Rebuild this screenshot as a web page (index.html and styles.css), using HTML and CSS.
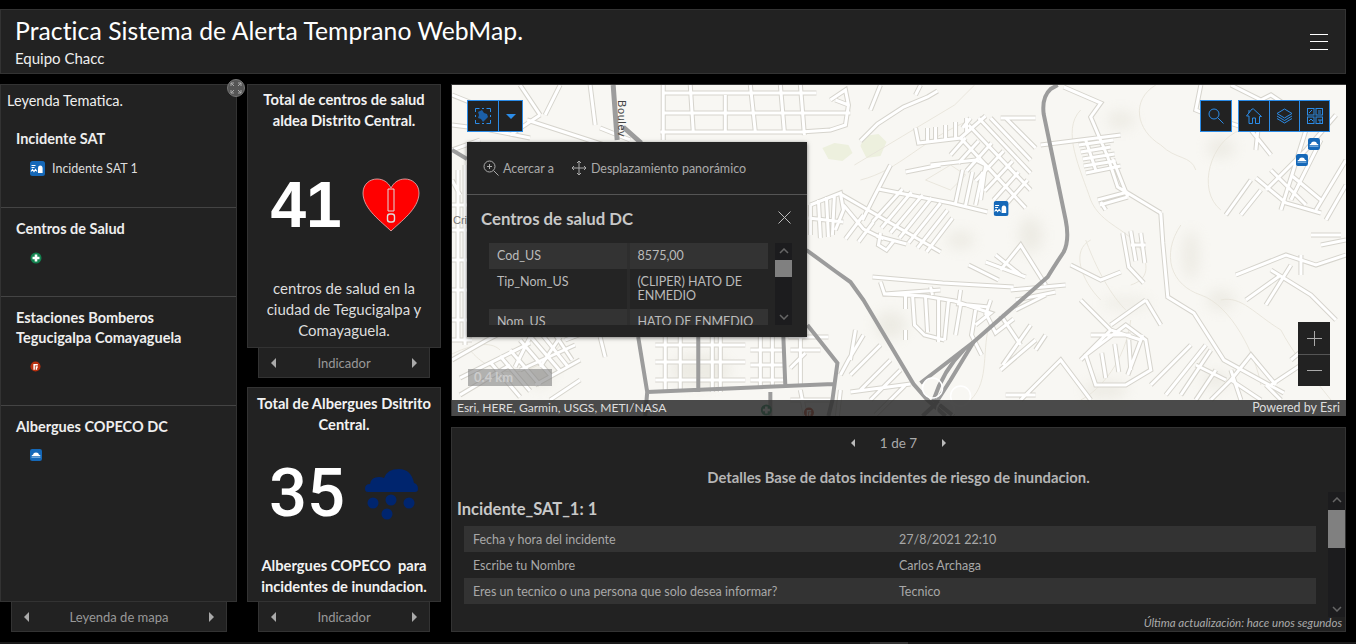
FILE: index.html
```html
<!DOCTYPE html>
<html lang="es">
<head>
<meta charset="utf-8">
<title>Practica Sistema de Alerta Temprano WebMap.</title>
<link rel="stylesheet" href="styles.css">
</head>
<body>
<svg class="defs" width="0" height="0" aria-hidden="true">
  <defs>
    <symbol id="i-flood" viewBox="0 0 15 15">
      <rect width="15" height="15" rx="2.5" fill="#1568b8"/>
      <path d="M8 12V7.500q0-3 2.300-3t2.300 3V12z" fill="#fff"/>
      <path d="M1.500 4.500h4M1.500 6.500h3" stroke="#fff" stroke-width="1.100" fill="none"/>
      <path d="M1 10.500l1.500-2 1.500 2 1.500-2 1.500 2" stroke="#fff" stroke-width="1.100" fill="none"/>
    </symbol>
    <symbol id="i-cloud" viewBox="0 0 12 12">
      <rect width="12" height="12" rx="2.2" fill="#1568b8"/>
      <path d="M1.500 7.200q0-1.400 1.500-1.500 .3-2.200 3-2.200t3 2.200q1.600 .1 1.500 1.500z" fill="#fff"/>
      <path d="M1.500 8.500h9" stroke="#6aa3d8" stroke-width="1"/>
    </symbol>
    <symbol id="i-health" viewBox="0 0 12 12">
      <circle cx="6" cy="6" r="5.500" fill="#13824f"/>
      <path d="M6 2.500v7M2.500 6h7" stroke="#fff" stroke-width="2.600"/>
    </symbol>
    <symbol id="i-fire" viewBox="0 0 12 12">
      <circle cx="6" cy="6" r="5.500" fill="#b8300f"/>
      <path d="M4.500 9.500V4h4M7 9.500V6.500h1.500" stroke="#fff" stroke-width="1.600" fill="none"/>
    </symbol>
  </defs>
</svg>

<div class="app">
  <header class="topbar">
    <div class="titles">
      <h1 class="title">Practica Sistema de Alerta Temprano WebMap.</h1>
      <p class="subtitle">Equipo Chacc</p>
    </div>
    <button class="burger" aria-label="Menú"><span></span><span></span><span></span></button>
  </header>

  <main class="layout">
    <section class="col-legend card">
      <div class="card-body legend">
        <p class="legend-head">Leyenda Tematica.</p>
        <div class="legend-group lg-1">
          <h3>Incidente SAT</h3>
          <div class="legend-item"><svg class="ic15"><use href="#i-flood"/></svg><span>Incidente SAT 1</span></div>
        </div>
        <div class="legend-group lg-2">
          <h3>Centros de Salud</h3>
          <div class="legend-item"><svg class="ic12"><use href="#i-health"/></svg></div>
        </div>
        <div class="legend-group lg-3">
          <h3>Estaciones Bomberos Tegucigalpa Comayaguela</h3>
          <div class="legend-item"><svg class="ic10"><use href="#i-fire"/></svg></div>
        </div>
        <div class="legend-group lg-4">
          <h3>Albergues COPECO DC</h3>
          <div class="legend-item"><svg class="ic12"><use href="#i-cloud"/></svg></div>
        </div>
      </div>
      <div class="tab tab-legend">
        <i class="tri tri-l"></i><span>Leyenda de mapa</span><i class="tri tri-r"></i>
      </div>
      <button class="expand" aria-label="Expandir">
        <svg width="12" height="12" viewBox="0 0 12 12" fill="none" stroke="#aaa" stroke-width="1"><path d="M1 4V1h3M1 1l3 3M8 1h3v3M11 1L8 4M1 8v3h3M1 11l3-3M8 11h3V8M11 11L8 8"/></svg>
      </button>
    </section>

    <div class="col-ind">
      <section class="card ind ind-1">
        <div class="card-body ind-body">
          <p class="ind-title">Total de centros de salud aldea Distrito Central.</p>
          <div class="ind-mid">
            <span class="num num-41">41</span>
            <svg class="heart" viewBox="0 0 58 54"><path d="M29 53C20 44 1 31 1 15 1 6 8 1 15 1c6 0 11 3 14 9 3-6 8-9 14-9 7 0 14 5 14 14 0 16-19 29-28 38z" fill="#f00" stroke="#e6b8b8" stroke-width=".8"/><path d="M26 11h6v22h-6z" fill="#f00" stroke="#ddd" stroke-width="1"/><rect x="25.500" y="36" width="7" height="8" rx="2.500" fill="#f00" stroke="#ddd" stroke-width="1.400"/></svg>
          </div>
          <p class="ind-text">centros de salud en la ciudad de Tegucigalpa y Comayaguela.</p>
        </div>
        <div class="tab tab-ind"><i class="tri tri-l"></i><span>Indicador</span><i class="tri tri-r"></i></div>
      </section>
      <section class="card ind ind-2">
        <div class="card-body ind-body">
          <p class="ind-title">Total de Albergues Dsitrito Central.</p>
          <div class="ind-mid ind-mid-2">
            <span class="num num-35">35</span>
            <svg class="cloud" viewBox="0 0 56 56" fill="#00256e"><path d="M2 24q0-5 5-5 1-7 9-7 3 0 5 1 3-9 15-9 12 0 15 14 4 1 4 6 0 3-3 3H5q-3 0-3-3z"/><circle cx="10" cy="38" r="5.500"/><circle cx="28" cy="35" r="5.500"/><circle cx="46" cy="38" r="5.500"/><circle cx="24" cy="49" r="5.500"/></svg>
          </div>
          <p class="ind-title ind-foot">Albergues COPECO&nbsp; para incidentes de inundacion.</p>
        </div>
        <div class="tab tab-ind"><i class="tri tri-l"></i><span>Indicador</span><i class="tri tri-r"></i></div>
      </section>
    </div>

    <div class="col-main">
      <section class="map">
        <svg class="basemap" viewBox="452 85 893 331" preserveAspectRatio="none">
          <defs>
            <filter id="blur" x="-50%" y="-50%" width="200%" height="200%"><feGaussianBlur stdDeviation="7"/></filter>
            <g id="streets">
              <path d="M452 95l30 12 40 10M520 85l20 30M480 140l-28 10M452 125l40 5M490 130l40 8M560 85l-15 30M540 115l-30 20"/>
              <path d="M527 120l80 26M600 128l30 12M590 85l5 40"/>
              <path d="M663 85v55M663 93H816M663 113H850M660 132H800l30-2 15-5 3-20-3-15-15 10M690 85l3 47M725 95v37M750 85l5 47M780 85l4 47M800 85l4 50M835 100l13 5"/>
              <path d="M860 141l17-17 26-17 24-10 10-6M880 85l-10 25M920 85l-5 10"/>
              <path d="M915 128l3 15 42-5 25-22M927 128v14M935 127v14M945 125v15M955 122v16M966 118v14"/>
              <path d="M960 138l65 70M968 125l62 65M978 118l52 55M990 118l40 42M1005 118l30 30M950 155l15-17M958 163l20-22M966 171l25-28M975 181l28-30M984 191l28-30M993 200l25-28M1002 208l25-28M970 118l-8 10M1000 118h35"/>
              <path d="M878 189l72 14 37 9M840 194l100 58M890 165l-18 35-10 20M930 165l45-5 10 5 -5 35M962 170l-7 33M972 172l-7 33M982 172l-7 33M905 172l35-7"/>
              <path d="M872 222l30-33M881 228l30-36M890 233l32-38M899 238l32-40M908 243l32-40M917 248l30-38M926 252l26-34M876 236l30 8M880 233l-2 12 8 5 8-10"/>
              <path d="M810 205l30-12 3 17-8 20M810 205v30M818 200l2 38M826 197l2 40M834 195l-2 40M808 218l35 4M843 205l20 24 20 10M863 215l-18 24M873 222l-15 20"/>
              <path d="M872 277l70 6 71 4M880 282l4 12 56-4M884 294l40 2 30 5 36 12 -15 12M930 287l2 8M960 290l-2 14 30 3M948 300l-4 40M960 305l-5 30M975 310l-4 25 10 20M905 294v15M912 295l2 30 10 10 20 5M925 297l2 35M938 297v45M905 330v10M985 313l10 20 18-14"/>
              <path d="M1000 270l20-25 25 40M985 262l40 15M968 265l30 15M995 255l25 20"/>
              <path d="M1063 87l37 16-10 14 17 40 10 30 43 26M1127 197l-15-38M1040 145l40-5 40-5M1085 140l10 30M1078 145l35-5M1080 152l30-5M1082 159l32-5M1083 166l32-5M1085 173l35-7M1097 200l30-8M1127 197l-28 8M1105 210l-5-8"/>
              <path d="M1160 213l2 30 5 54 26 16 30 47 60 33M1122 233l6 34 15 16M1140 233l4 30M1130 231l5 30M1130 245l15 0"/>
              <path d="M1230 85l30 15 10-5 30 20 25 5M1200 85l-5 25 25 10 30 10 20 25M1260 100l-5 50M1335 115l-30 35-40 40M1320 140l-30 60M1305 130l-25 80M1290 175l30 25M1255 178l30 25 35 10M1225 215l25-35M1240 215l20-25M1270 170l35 35M1345 160l-30 50M1345 185l-20 35"/>
              <path d="M1235 275l50-20 30 10 30-10M1270 270l40 25 25 25M1245 300l35-25M1265 305l25-40M1300 255v20M1345 240l-25 5M1310 235l30 0"/>
              <path d="M1070 265l30 15 20-8M1080 300l30 30 30 10M1110 325l35-25M1090 335h40M1142 335l-15 40M1145 300l15 25M1080 360l30-30M1095 385l-10-30 40-30 20 15 5 30-25 15zM1105 378l-4-25M1118 372l-4-28M1130 370l-2-30"/>
              <path d="M1150 385l40-40M1165 395l40-50M1180 395l30-45M1195 400l20-30M1225 380l-30-15M1210 400l20-20M1240 400l-10-30M1260 400l-30-20 20-25 25 30M1280 400l-15-15M1270 385l30-20M1290 360l30-25"/>
              <path d="M990 300l-5 15M1000 315l20 30M1030 325l-28 40M1045 335l-10 15M1000 370l35-30M1005 395l30 0M1020 400l40-40 30 40M1010 290l55-5M1015 300l40-8M1015 310l30-15"/>
              <path d="M452 360l35-20 30-15 40-5M460 378l70-35M460 395l50-30M520 340l30 35M530 336l30 35M540 332l28 35M552 330l20 30M510 350l30 35M500 356l30 35M490 362l30 35M565 340l40-15M520 370l55-25M535 385l45-25M550 400l30-20"/>
              <path d="M655 345h90M655 362h90M655 380h90M665 337v55M680 337v55M720 337v55M800 337v50M712 337v55M750 350h35M750 365h35M750 380h35M760 337v50M772 337v50M788 337h40M790 350h30M790 368l15-15"/>
              <path d="M800 390l5 26M790 400l40 0M840 390l-3 26M850 392l60-8M863 335l-15 25-8 15M880 345l-30 30M890 360l-30 30M900 370l-30 30M905 385l-30 30M855 330l-5 30"/>
              <path d="M452 180l8 15M452 205h15M452 230h15M452 260h15M452 290h15M452 320h15M458 170v170M465 165v180M530 337l-15 30M600 337l5 20M560 337l-20 30M452 340h20"/>
            </g>
          </defs>
          <rect x="452" y="85" width="893" height="331" class="land"/>
          <g class="hills" filter="url(#blur)">
            <ellipse cx="1125" cy="303" rx="25" ry="5"/><ellipse cx="1190" cy="255" rx="8" ry="25"/><ellipse cx="1215" cy="380" rx="14" ry="8"/><ellipse cx="1105" cy="390" rx="22" ry="9"/><ellipse cx="1220" cy="300" rx="14" ry="10"/><ellipse cx="1120" cy="120" rx="14" ry="9"/><ellipse cx="1220" cy="148" rx="14" ry="10"/><ellipse cx="960" cy="240" rx="14" ry="9"/><ellipse cx="1030" cy="235" rx="12" ry="18"/><ellipse cx="890" cy="325" rx="16" ry="14"/><ellipse cx="700" cy="370" rx="30" ry="16"/><ellipse cx="540" cy="375" rx="12" ry="12"/>
          </g>
          <path class="park" d="M822 148l12-5 14 2 4 8-10 8-14-2zM864 136l14-2 8 8-6 14-14 2-6-12z"/>
          <g class="contours">
            <path d="M854 165l100-60 20-20M860 180c40-10 60-40 110-60M925 180l25 10 15-15-15-10zM1080 110c-20 20 0 60 10 90 10 25 40 30 50 50s5 30-10 35M1155 85c-25 15-20 45 5 60 15 15 30 10 35 25M1240 130c-30 10-45 60-20 80M1085 240c15 40 30 60 40 70M1180 225c-20 30-10 60 20 70 30 10 55 60 60 90M1130 320c-5 40-30 70-50 80M990 320c-10 30 0 60-20 80M1220 300c20-5 35 15 60 30 10 20 30 45 50 70M450 355c20-10 40-15 50-5M560 345c-30 40-70 30-90 5M1100 300c-20-20-30-50-10-60"/>
          </g>
          <use href="#streets" class="casing"/>
          <use href="#streets" class="street"/>
          <g class="hwy">
            <path d="M1057 85l-7 4q-9 8-7 25l22 106q4 20-2 32-10 15-16 25l-74 65-53 41"/>
            <path d="M973 342l-23 38-16 25-12 11"/>
            <path d="M963 350q-20 20-30 50l20 16"/>
            <path d="M806 250l30 22 14 10 13 18 50 84 14 16 18 16"/>
            <path class="hwy-w" d="M613 85l4 55M623 127l18 16"/>
            <path d="M452 150l15 9M638 337l9 55-2 24M647 392l186-8M698 337v55M783 337l2 50M807 325l30 38-5 37-4 16M770 392v24"/>
          </g>
          <g class="interchange"><circle cx="932" cy="388" r="10"/><circle cx="960" cy="396" r="10"/><circle cx="945" cy="410" r="9"/></g>
          <text x="618" y="100" class="boulev" transform="rotate(90 618 100)">Boulev</text>
          <text x="453" y="224" class="crilabel">Cri</text>
          <use href="#i-flood" x="993" y="201" width="15" height="15"/>
          <use href="#i-cloud" x="1307" y="138" width="12" height="12"/>
          <use href="#i-cloud" x="1295" y="154" width="12" height="12"/>
          <use href="#i-health" x="760" y="404" width="12" height="12"/>
          <use href="#i-fire" x="803" y="407" width="11" height="11"/>
        </svg>

        <div class="tools tools-left">
          <button class="tbtn"><svg width="16" height="16" viewBox="0 0 16 16" fill="none" stroke="#2b8ce8"><path d="M.5 4V.5h4M7 .5h2M11.500 .5h4V4M15.500 7v2M15.500 12v3.500h-4M9 15.500H7M4.500 15.500h-4V12M.5 9V7"/><path d="M3 4l4-2 2 3 3 1 1 3-3 3-2 2-2-3-3-1 1-3z" fill="#1b5fa8" stroke="none"/></svg></button>
          <button class="tbtn"><i class="caret"></i></button>
        </div>
        <div class="tools tools-search">
          <button class="tbtn"><svg width="16" height="16" viewBox="0 0 16 16" fill="none" stroke="#2b8ce8" stroke-width="1"><circle cx="6" cy="6" r="5"/><path d="M9.500 9.500l6 6"/></svg></button>
        </div>
        <div class="tools tools-right">
          <button class="tbtn"><svg width="16" height="16" viewBox="0 0 16 16" fill="none" stroke="#2b8ce8" stroke-width="1"><path d="M.5 8L6 1h1.500l8 7.500h-2V15.500H9.500V10h-3v5.500H3V8zM3 2v3"/></svg></button>
          <button class="tbtn"><svg width="17" height="16" viewBox="0 0 17 16" fill="none" stroke="#2b8ce8" stroke-width="1"><path d="M8.500 1L16 5.500 8.500 10 1 5.500zM1 8l7.500 4.500L16 8M1 10.500L8.500 15 16 10.500"/></svg></button>
          <button class="tbtn"><svg width="16" height="16" viewBox="0 0 16 16" fill="none" stroke="#2b8ce8" stroke-width="1"><rect x=".5" y=".5" width="6.500" height="6.500"/><rect x="9" y=".5" width="6.500" height="6.500"/><rect x=".5" y="9" width="6.500" height="6.500"/><rect x="9" y="9" width="6.500" height="6.500"/><path d="M2 5l3-3M11 3h3M11 5h3M2 13l2-2 2 2M11 12h4M13 12v3"/></svg></button>
        </div>

        <div class="zoomctl">
          <button class="zbtn"><svg width="15" height="15" viewBox="0 0 15 15" stroke="#aaa"><path d="M7.500 0v15M0 7.500h15"/></svg></button>
          <button class="zbtn"><svg width="15" height="15" viewBox="0 0 15 15" stroke="#aaa"><path d="M0 7.500h15"/></svg></button>
        </div>

        <div class="scale"><span>0.4 km</span></div>

        <div class="attrib"><span class="attrib-src">Esri, HERE, Garmin, USGS, METI/NASA</span><span>Powered by Esri</span></div>

        <div class="popup">
          <div class="pop-actions">
            <span class="act"><svg width="16" height="16" viewBox="0 0 16 16" fill="none" stroke="#aaa"><circle cx="6.500" cy="6.500" r="5.500"/><path d="M10.500 10.500L15.500 15.500M6.500 4v5M4 6.500h5"/></svg>Acercar a</span>
            <span class="act"><svg width="16" height="16" viewBox="0 0 16 16" fill="none" stroke="#aaa"><path d="M8 1v14M1 8h14M6 3l2-2 2 2M6 13l2 2 2-2M3 6L1 8l2 2M13 6l2 2-2 2"/></svg>Desplazamiento panorámico</span>
          </div>
          <div class="pop-head">
            <h2>Centros de salud DC</h2>
            <svg class="pop-x" width="13" height="13" viewBox="0 0 13 13" stroke="#bbb"><path d="M.5.500l12 12M12.500.500l-12 12"/></svg>
          </div>
          <div class="pop-scroll">
            <table class="pop-table">
              <tr><td>Cod_US</td><td>8575,00</td></tr>
              <tr><td>Tip_Nom_US</td><td>(CLIPER) HATO DE ENMEDIO</td></tr>
              <tr><td>Nom_US</td><td>HATO DE ENMEDIO</td></tr>
            </table>
            <div class="sbar sbar-pop">
              <svg class="chev" width="10" height="6" viewBox="0 0 10 6" fill="none" stroke="#666" stroke-width="1.500"><path d="M1 5l4-4 4 4"/></svg>
              <i class="thumb"></i>
              <svg class="chev chev-b" width="10" height="6" viewBox="0 0 10 6" fill="none" stroke="#666" stroke-width="1.500"><path d="M1 1l4 4 4-4"/></svg>
            </div>
          </div>
        </div>
      </section>

      <section class="list">
        <div class="pager"><i class="tri tri-l"></i><span>1 de 7</span><i class="tri tri-r"></i></div>
        <p class="list-title">Detalles Base de datos incidentes de riesgo de inundacion.</p>
        <div class="list-scroll">
          <div class="list-content">
            <h2>Incidente_SAT_1: 1</h2>
            <table class="list-table">
              <tr><td>Fecha y hora del incidente</td><td>27/8/2021 22:10</td></tr>
              <tr><td>Escribe tu Nombre</td><td>Carlos Archaga</td></tr>
              <tr><td>Eres un tecnico o una persona que solo desea informar?</td><td>Tecnico</td></tr>
            </table>
          </div>
          <div class="sbar sbar-list">
            <svg class="chev" width="10" height="6" viewBox="0 0 10 6" fill="none" stroke="#666" stroke-width="1.500"><path d="M1 5l4-4 4 4"/></svg>
            <i class="thumb"></i>
            <svg class="chev chev-b" width="10" height="6" viewBox="0 0 10 6" fill="none" stroke="#666" stroke-width="1.500"><path d="M1 1l4 4 4-4"/></svg>
          </div>
        </div>
        <p class="updated">Última actualización: hace unos segundos</p>
      </section>
    </div>
  </main>
  <div class="strip"><i></i></div>
</div>
</body>
</html>
```
FILE: styles.css
```css
* { box-sizing: border-box; }
html, body { margin: 0; height: 100%; overflow: hidden; }
body { background: #000; font-family: Lato, "Noto Sans", sans-serif; color: #ddd; }
p, h1, h2, h3 { margin: 0; }
button { padding: 0; border: 0; background: none; display: flex; align-items: center; justify-content: center; }
.defs { position: absolute; }

.app { padding-top: 9px; height: 644px; display: flex; flex-direction: column; }

.topbar { height: 65px; margin-right: 10px; background: #222; border: 1px solid #333; display: flex; align-items: center; justify-content: space-between; padding: 0 17px 0 14px; }
.title { font-size: 24.700px; font-weight: 400; color: #fff; line-height: 30px; letter-spacing: .06px; }
.subtitle { font-size: 15px; line-height: 20px; color: #eee; margin-top: 2px; }
.burger { flex-direction: column; gap: 6.500px; width: 18px; }
.burger span { display: block; width: 18px; height: 1px; background: #fff; }

.layout { display: grid; grid-template-columns: 237px 194px 895px; column-gap: 10px; margin-top: 10px; height: 548px; }

.card { display: flex; flex-direction: column; position: relative; min-height: 0; }
.card-body { flex: 1; background: #222; border: 1px solid #333; min-height: 0; }
.tab { height: 30px; background: #222; border: 1px solid #333; border-top: 0; display: flex; align-items: center; justify-content: space-between; padding: 0 12px; font-size: 13px; color: #999; }
.tab-legend { margin: 0 10px 0 11px; }
.tab-ind { margin: 0 11px; }
.tri { display: block; width: 0; height: 0; border-style: solid; border-color: transparent; border-width: 5px 0; }
.tri-l { border-right: 5px solid #aaa; }
.tri-r { border-left: 5px solid #aaa; }

.expand { position: absolute; left: 227px; top: -5px; width: 18px; height: 18px; border-radius: 50%; background: #555; border: 1px solid #777; }

.legend { padding-top: 6px; }
.legend-head { font-size: 14.500px; line-height: 20px; padding-left: 6px; color: #eee; }
.legend-group { padding: 0 15px; border-bottom: 1px solid #444; }
.legend-group:last-child { border-bottom: 0; }
.legend-group h3 { font-size: 14.500px; font-weight: 700; line-height: 20px; color: #eee; }
.legend-item { display: flex; align-items: center; gap: 7px; padding-left: 14px; font-size: 12.500px; color: #ddd; }
.lg-1 { padding-top: 18px; height: 97px; }
.lg-1 .legend-item { margin-top: 12px; }
.lg-2 { padding-top: 11px; height: 89px; }
.lg-2 .legend-item { margin-top: 13px; }
.lg-3 { padding-top: 11px; height: 109px; }
.lg-3 .legend-item { margin-top: 13px; }
.lg-4 { padding-top: 11px; }
.lg-4 .legend-item { margin-top: 12px; }
.ic15 { width: 15px; height: 15px; }
.ic12 { width: 12px; height: 12px; }
.ic10 { width: 11px; height: 11px; }

.col-ind { display: flex; flex-direction: column; gap: 9px; }
.ind-1 { height: 294px; }
.ind-2 { flex: 1; }
.ind-body { display: flex; flex-direction: column; text-align: center; padding: 5px 2px 0; }
.ind-1 .ind-body { padding-top: 4px; }
.ind-title { font-size: 14.700px; font-weight: 700; line-height: 21px; color: #f2f2f2; }
.ind-text { font-size: 15px; line-height: 21px; color: #ddd; padding: 0 8px; }
.ind-mid { display: flex; align-items: center; justify-content: center; }
.ind-1 .ind-mid { height: 147px; gap: 20px; padding-left: 2px; }
.ind-2 .ind-mid { height: 116px; gap: 18px; }
.ind-foot { margin-top: 4px; }
.num { color: #fff; line-height: 1; }
.num-41 { font-family: "Liberation Sans", sans-serif; font-size: 64px; font-weight: 700; }
.num-35 { font-family: Roboto, "Liberation Sans", sans-serif; font-size: 67px; font-weight: 500; }
.heart { width: 58px; height: 54px; }
.cloud { width: 56px; height: 56px; }

.col-main { display: flex; flex-direction: column; gap: 11px; min-width: 0; }

.map { position: relative; height: 332px; border-top: 1px solid #333; border-left: 1px solid #333; overflow: hidden; background: #f8f7f3; }
.basemap { display: block; width: 100%; height: 100%; }
.land { fill: #f8f7f3; }
.hills { fill: #d8d5c8; opacity: .35; }
.park { fill: #edf0de; }
.contours { fill: none; stroke: #e8e4da; stroke-width: .9; }
.casing { fill: none; stroke: #d6d4cd; stroke-width: 5; }
.street { fill: none; stroke: #fff; stroke-width: 3; }
.hwy { fill: none; stroke: #9c9c9c; stroke-width: 4; }
.hwy-w { stroke-width: 5; }
.interchange { fill: none; stroke: #fff; stroke-width: 1.500; }
.boulev { font: 11px "Liberation Sans", sans-serif; fill: #444; letter-spacing: .6px; }
.crilabel { font: 11px "Liberation Sans", sans-serif; fill: #777; }

.tools { position: absolute; display: flex; height: 32px; border: 1px solid #2b8ce8; background: #222; }
.tools-left { left: 15px; top: 15px; }
.tools-search { left: 748px; top: 15px; }
.tools-right { left: 786px; top: 15px; }
.tbtn { width: 30px; height: 30px; border-left: 1px solid #2b8ce8; }
.tbtn:first-child { border-left: 0; }
.tools-left .tbtn:last-child { width: 24px; }
.caret { display: block; width: 0; height: 0; border: 5px solid transparent; border-top: 5px solid #2b8ce8; border-bottom: 0; }

.zoomctl { position: absolute; left: 846px; top: 237px; width: 32px; background: #222; }
.zbtn { width: 32px; height: 32px; }
.zbtn + .zbtn { border-top: 1px solid #555; }

.scale { position: absolute; left: 16px; top: 284px; width: 84px; height: 17px; background: rgba(130,130,130,.6); padding-left: 6px; font-size: 13px; line-height: 17px; font-weight: 700; color: #ccc; }

.attrib { position: absolute; left: 0; right: 0; bottom: 0; height: 16px; padding: 0 6px 0 5px; background: rgba(45,45,45,.86); display: flex; justify-content: space-between; font-size: 12.500px; line-height: 16px; color: #ddd; }
.attrib-src { font-size: 12.100px; }

.popup { position: absolute; left: 15px; top: 57px; width: 340px; height: 195px; background: #242424; box-shadow: 0 1px 4px rgba(0,0,0,.5); }
.pop-actions { height: 53px; border-bottom: 1px solid #555; display: flex; align-items: center; gap: 17px; padding: 0 0 0 16px; }
.act { display: flex; align-items: center; gap: 4px; font-size: 12.500px; color: #aaa; }
.pop-head { display: flex; justify-content: space-between; align-items: center; padding: 0 16px 2px 14px; height: 48px; }
.pop-head h2 { font-size: 16.800px; font-weight: 700; color: #c8c8c8; }
.pop-x { margin-top: -2px; }
.pop-scroll { display: flex; height: 82px; margin-left: 22px; width: 303px; overflow: hidden; justify-content: space-between; }
.pop-table { width: 279px; border-collapse: collapse; table-layout: fixed; font-size: 12.500px; line-height: 14px; color: #bbb; align-self: flex-start; }
.pop-table td { padding: 6px 8px; vertical-align: top; }
.pop-table td:first-child { width: 139px; border-right: 3px solid #2a2a2a; }
.pop-table tr:nth-child(odd) { background: #333; }
.pop-table tr:nth-child(odd) td:first-child { border-right-color: #2e2e2e; }

.sbar { position: relative; width: 17px; background: #1c1c1e; flex: none; }
.sbar-pop .thumb { position: absolute; top: 17px; left: 0; width: 17px; height: 17px; background: #808080; }
.sbar-list .thumb { position: absolute; top: 18px; left: 0; width: 17px; height: 38px; background: #808080; }
.chev { position: absolute; left: 3.500px; top: 5px; }
.chev-b { top: auto; bottom: 5px; }

.list { flex: 1; background: #222; border: 1px solid #333; position: relative; min-height: 0; display: flex; flex-direction: column; }
.pager { display: flex; align-items: center; justify-content: center; gap: 25px; height: 28px; font-size: 13.500px; color: #aaa; padding-top: 1px; }
.pager .tri { border-width: 4.500px 0; }
.pager .tri-l { border-right: 4px solid #bbb; }
.pager .tri-r { border-left: 4px solid #bbb; }
.list-title { text-align: center; font-size: 14.800px; font-weight: 700; color: #b5b5b5; line-height: 20px; margin-top: 11px; }
.list-scroll { display: flex; justify-content: space-between; height: 125px; margin-top: 5px; }
.list-content { padding: 5px 12px 0 5px; flex: 1; }
.list-content h2 { font-size: 16.500px; font-weight: 700; line-height: 24px; color: #c8c8c8; }
.list-table { width: 852px; margin: 5px 0 0 7px; border-collapse: collapse; table-layout: fixed; font-size: 12.500px; color: #a8a8a8; }
.list-table td { height: 26px; padding: 0 0 0 9px; }
.list-table td:first-child { width: 426px; }
.list-table tr:nth-child(odd) { background: #333; }
.updated { position: absolute; right: 3px; bottom: 1px; font-size: 11.500px; line-height: 14px; font-style: italic; color: #aaa; }

.strip { height: 2px; margin-top: 10px; background: #1a1a1a; position: relative; }
.strip i { position: absolute; left: 870px; width: 38px; height: 2px; background: #333; }
```
